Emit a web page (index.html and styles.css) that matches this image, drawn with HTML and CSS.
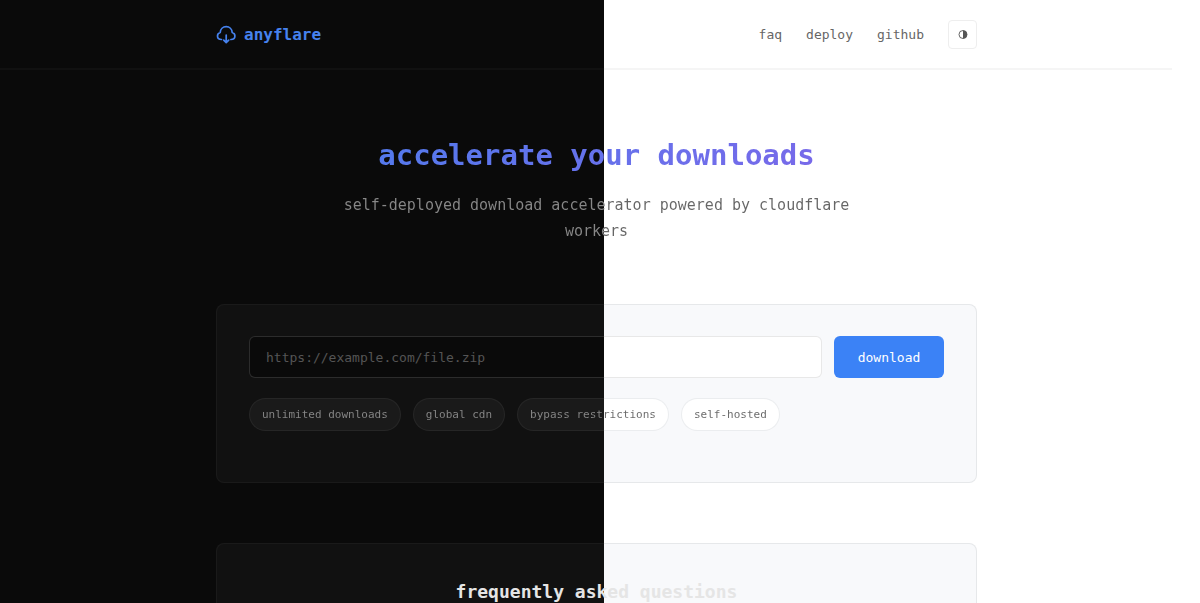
FILE: index.html
```html
<!DOCTYPE html>
<html lang="en">
<head>
<meta charset="utf-8">
<meta name="viewport" content="width=device-width, initial-scale=1">
<title>anyflare</title>
<link rel="stylesheet" href="styles.css">
</head>
<body>
<header class="header">
  <div class="container header-row">
    <a class="logo" href="#">
      <svg class="logo-icon" viewBox="0 0 20 20" fill="none" stroke="currentColor" stroke-width="1.7" stroke-linecap="round" stroke-linejoin="round" aria-hidden="true">
        <path d="M5.500 14.500C2.800 14.500 1.500 12.900 1.500 11c0-1.700 1-3 2.700-3.500C4.400 4 6.900 1.600 10.200 1.600s5.800 2.400 6 5.900c1.700.5 2.700 1.800 2.700 3.500 0 1.900-1.500 3.500-4 3.500"/>
        <path d="M10.200 10v7.500M7.700 15.100 10.200 17.600l2.500-2.500"/>
      </svg>
      <span>anyflare</span>
    </a>
    <nav class="nav">
      <a href="#faq">faq</a>
      <a href="#deploy">deploy</a>
      <a href="#github">github</a>
      <button class="theme-toggle" type="button" aria-label="toggle theme">
        <svg class="theme-icon" viewBox="0 0 10 10" aria-hidden="true">
          <circle cx="5" cy="4.500" r="4" fill="none" stroke="currentColor" stroke-width="0.900"/>
          <path d="M5 .5a4 4 0 0 1 0 8z" fill="currentColor"/>
        </svg>
      </button>
    </nav>
  </div>
</header>
<main class="container">
  <section class="hero">
    <h1 class="hero-title">accelerate your downloads</h1>
    <p class="hero-text split-text">self-deployed download accelerator powered by cloudflare workers</p>
  </section>
  <section class="card split-box">
    <form class="form">
      <input class="url split-box" type="url" aria-label="file url" placeholder="https://example.com/file.zip">
      <button class="submit" type="button">download</button>
    </form>
    <ul class="chips">
      <li class="chip split-box"><span class="split-text">unlimited downloads</span></li>
      <li class="chip split-box"><span class="split-text">global cdn</span></li>
      <li class="chip split-box"><span class="split-text">bypass restrictions</span></li>
      <li class="chip split-box"><span class="split-text">self-hosted</span></li>
    </ul>
  </section>
  <section class="card split-box" id="faq">
    <h2 class="faq-title">frequently asked questions</h2>
  </section>
</main>
</body>
</html>
```
FILE: styles.css
```css
:root {
  --split: 50.3333vw;
  --accent: #3b82f6;
  --mono: "DejaVu Sans Mono", "Liberation Mono", monospace;
}

* {
  box-sizing: border-box;
}

html {
  overflow-x: hidden;
  scrollbar-width: none;
}

body {
  margin: 0;
  padding-right: 7px;
  font-family: var(--mono);
  font-size: 13px;
  background: linear-gradient(to right, #0a0a0a var(--split), #ffffff var(--split)) fixed;
}

/* Dark values left of the split, light values right of it */
.split-box {
  border: 1px solid transparent;
  background:
    linear-gradient(to right, var(--fill-dark) var(--split), var(--fill-light) var(--split)) fixed padding-box,
    linear-gradient(to right, var(--line-dark) var(--split), var(--line-light) var(--split)) fixed border-box;
}

.split-text {
  color: transparent;
  background: linear-gradient(to right, #888888 var(--split), #666666 var(--split)) fixed;
  -webkit-background-clip: text;
  background-clip: text;
}

.container {
  width: 100%;
  max-width: 761px;
  margin: 0 auto;
}

.header {
  padding: 20px 0 21px;
  background: linear-gradient(to right, #111111 var(--split), #f5f5f5 var(--split)) left bottom / calc(100% - 21px) 2px no-repeat;
}

.header-row,
.logo,
.nav {
  display: flex;
  align-items: center;
}

.header-row {
  justify-content: space-between;
}

.logo {
  gap: 8px;
  color: #4682ee;
  font-size: 16px;
  font-weight: 700;
  text-decoration: none;
}

.logo-icon {
  width: 20px;
  height: 20px;
}

.nav {
  gap: 24px;
}

.nav a {
  color: #666666;
  text-decoration: none;
}

.theme-toggle {
  display: grid;
  place-items: center;
  width: 29px;
  height: 29px;
  padding: 0;
  border: 1px solid #eeeeee;
  border-radius: 4px;
  color: #555555;
  background: #ffffff;
}

.theme-icon {
  width: 10px;
  height: 10px;
}

.hero {
  padding: 64px 0 60px;
  text-align: center;
}

.hero-title {
  margin: 0 0 16px;
  font-size: 29px;
  line-height: 42px;
  color: transparent;
  background: linear-gradient(135deg, #4680ee, #8563e8);
  -webkit-background-clip: text;
  background-clip: text;
}

.hero-text {
  max-width: 560px;
  margin: 0 auto;
  font-size: 15px;
  line-height: 26px;
}

.card {
  --fill-dark: #111111;
  --fill-light: #f8f9fb;
  --line-dark: #1a1a1a;
  --line-light: #e6e8ea;
  margin-bottom: 60px;
  padding: 31px 32px;
  border-radius: 8px;
}

.form {
  display: flex;
  gap: 12px;
}

.url {
  --fill-dark: #0a0a0a;
  --fill-light: #ffffff;
  --line-dark: #2c2c2c;
  --line-light: #e8e8e8;
  flex: 1;
  min-width: 0;
  height: 42px;
  padding: 0 16px;
  border-radius: 6px;
  color: #888888;
  font: 13px var(--mono);
}

.url::placeholder {
  color: #555555;
}

.submit {
  width: 110px;
  border: 0;
  border-radius: 6px;
  color: #ffffff;
  background: var(--accent);
  font: 13px var(--mono);
}

.chips {
  display: flex;
  flex-wrap: wrap;
  gap: 12px;
  margin: 20px 0;
  padding: 0;
  list-style: none;
}

.chip {
  --fill-dark: #1a1a1a;
  --fill-light: #ffffff;
  --line-dark: #262626;
  --line-light: #ebedef;
  padding: 6px 12px;
  border-radius: 20px;
  font-size: 11px;
  line-height: 19px;
}

.faq-title {
  margin: 0;
  color: #e5e5e5;
  font-size: 18px;
  line-height: 34px;
  text-align: center;
}
```
